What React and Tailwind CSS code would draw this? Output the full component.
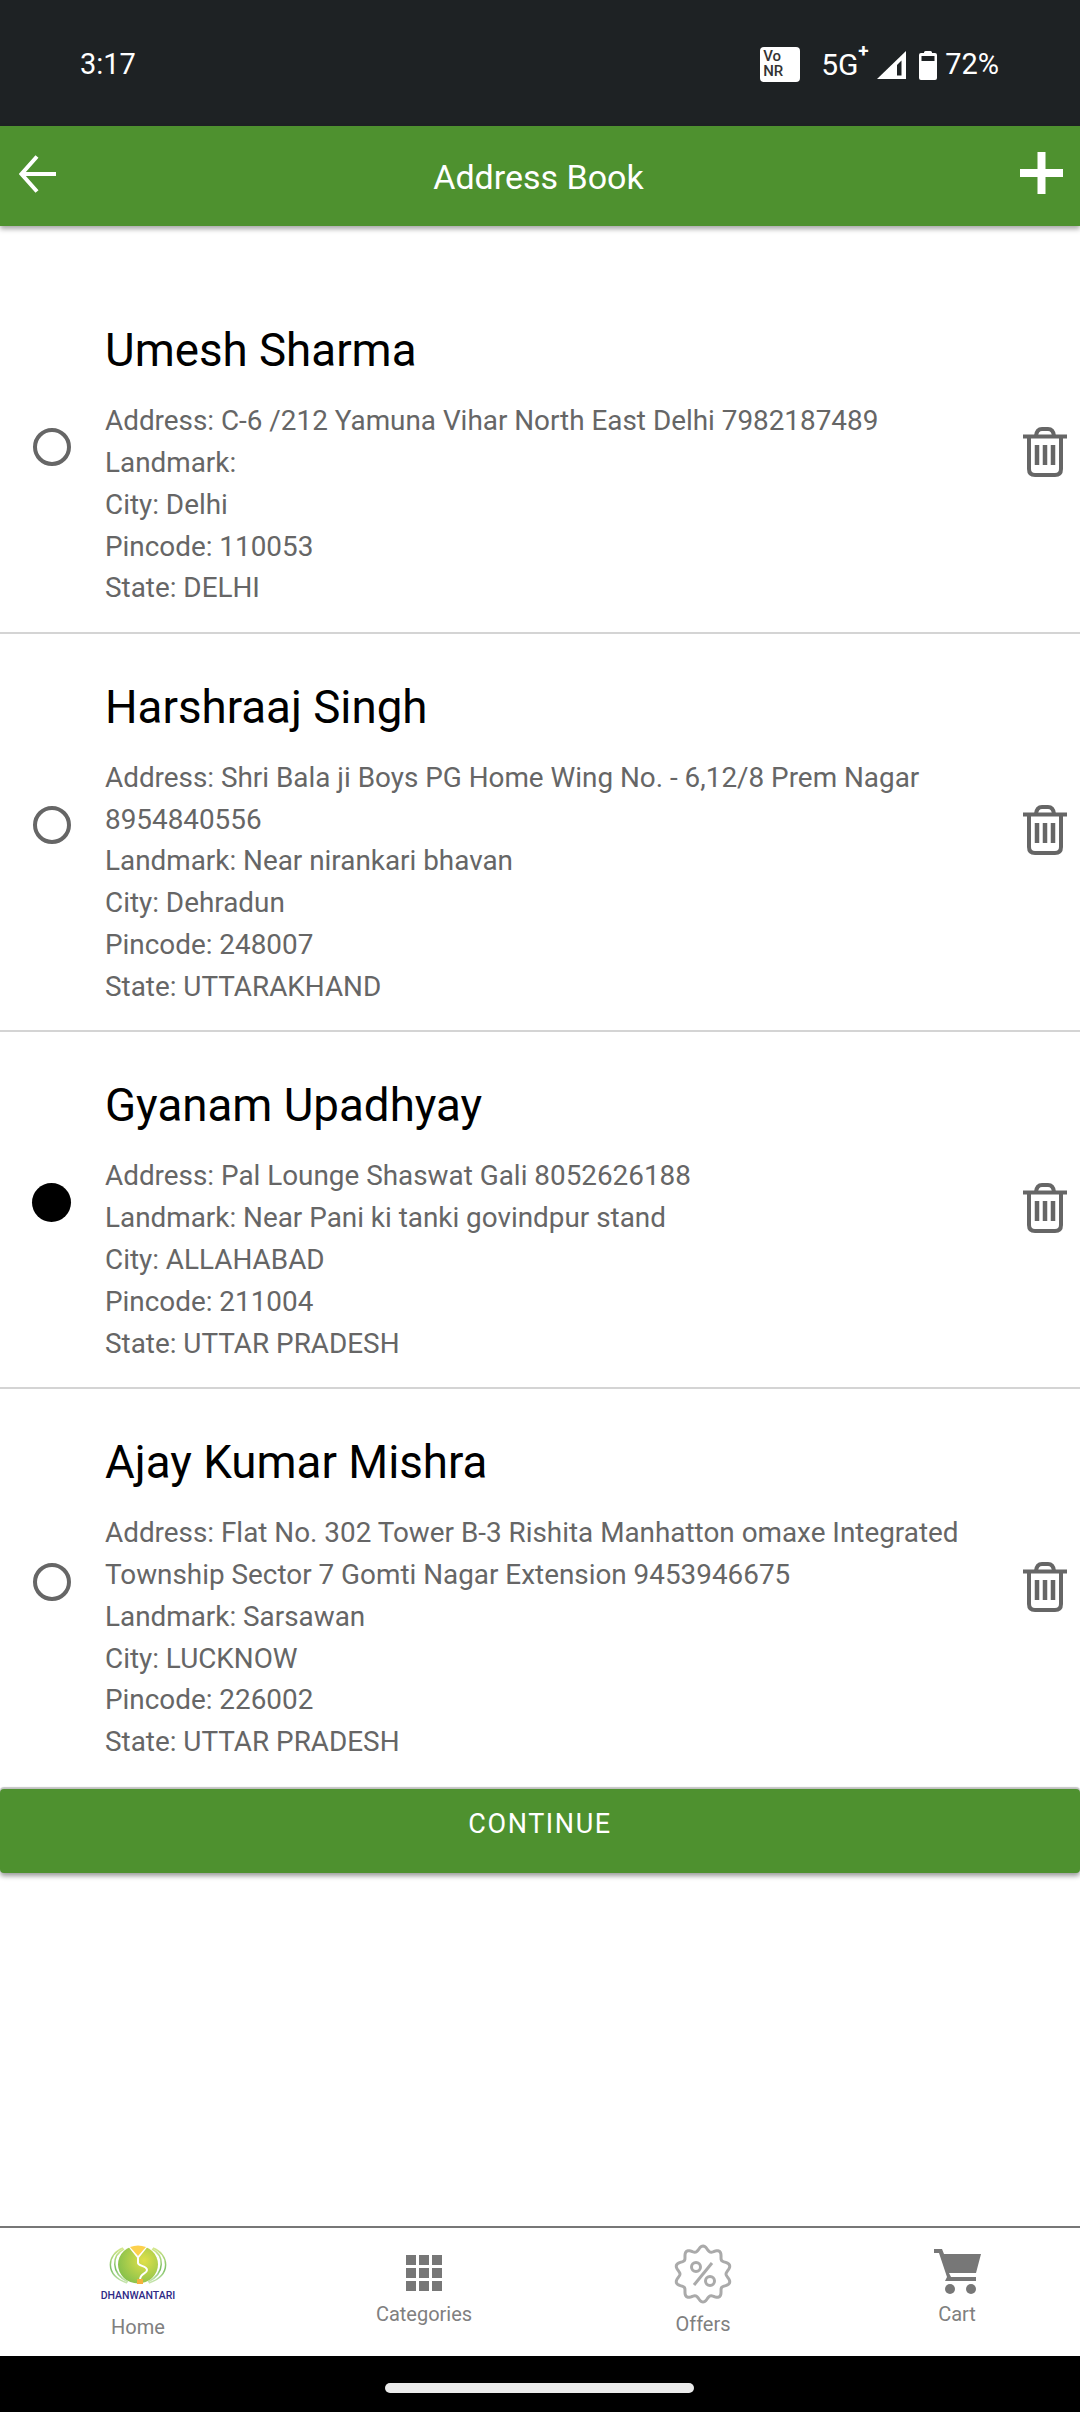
const addresses = [
  {
    name: 'Umesh Sharma',
    lines: ['Address: C-6 /212 Yamuna Vihar North East Delhi 7982187489', 'Landmark:', 'City: Delhi', 'Pincode: 110053', 'State: DELHI'],
  },
  {
    name: 'Harshraaj Singh',
    lines: ['Address: Shri Bala ji Boys PG Home Wing No. - 6,12/8 Prem Nagar 8954840556', 'Landmark: Near nirankari bhavan', 'City: Dehradun', 'Pincode: 248007', 'State: UTTARAKHAND'],
  },
  {
    name: 'Gyanam Upadhyay',
    selected: true,
    lines: ['Address: Pal Lounge Shaswat Gali 8052626188', 'Landmark: Near Pani ki tanki govindpur stand', 'City: ALLAHABAD', 'Pincode: 211004', 'State: UTTAR PRADESH'],
  },
  {
    name: 'Ajay Kumar Mishra',
    lines: ['Address: Flat No. 302 Tower B-3 Rishita Manhatton omaxe Integrated Township Sector 7 Gomti Nagar Extension 9453946675', 'Landmark: Sarsawan', 'City: LUCKNOW', 'Pincode: 226002', 'State: UTTAR PRADESH'],
  },
]

function badgePath() {
  const pts = []
  for (let i = 0; i < 120; i++) {
    const a = (i / 120) * Math.PI * 2
    const r = 25.5 + 2.5 * Math.cos(a * 10)
    pts.push(`${(30 + r * Math.sin(a)).toFixed(2)},${(30 - r * Math.cos(a)).toFixed(2)}`)
  }
  return `M${pts.join('L')}Z`
}

function StatusBar() {
  return (
    <div className="h-[126px] bg-[#1e2224] flex items-center text-white text-[29px] pl-[80px] pt-[3px] shrink-0">
      <span>3:17</span>
      <div className="ml-auto mr-[81px] flex items-center">
        <div className="w-[40px] h-[35px] bg-white rounded-[4px] text-[#333] text-[15px] leading-[15px] font-medium pl-[3px] pt-[2px]">
          Vo<br />NR
        </div>
        <span className="ml-[21px] w-[50px] relative text-[30px]">5G<span className="absolute left-[37px] top-[-5px] text-[19px] font-bold">+</span></span>
        <svg className="ml-[6px]" width="29" height="28" viewBox="0 0 29 28">
          <path d="M29 0V28H0Z" fill="#fff" />
          <path d="M20 14V24.5H24.5V9.5Z" fill="#1e2224" />
        </svg>
        <svg className="ml-[13px]" width="18" height="30" viewBox="0 0 18 30">
          <path d="M5 2.5Q5 1 6.5 1H11.5Q13 1 13 2.5V3H16Q18 3 18 5V28Q18 30 16 30H2Q0 30 0 28V5Q0 3 2 3H5Z" fill="#fff" />
          <rect x="2.5" y="6" width="13" height="5" fill="#1e2224" />
        </svg>
        <span className="ml-[8px]">72%</span>
      </div>
    </div>
  )
}

function Header() {
  return (
    <div className="h-[100px] bg-[#4e912f] shrink-0 relative z-10 flex items-center justify-center text-white text-[34px] pr-[3px] shadow-[0_3px_5px_rgba(0,0,0,0.35)]">
      <svg className="absolute left-[19px] top-[29px]" width="38" height="38" viewBox="0 0 38 38">
        <path d="M18 1.5L2.5 19L18 36.5M2.5 19H37" fill="none" stroke="#fff" strokeWidth="4" />
      </svg>
      <span className="pt-[2px]">Address Book</span>
      <svg className="absolute left-[1020px] top-[26px]" width="43" height="42" viewBox="0 0 43 42">
        <path d="M21.5 0V42M0 21H43" fill="none" stroke="#fff" strokeWidth="8" />
      </svg>
    </div>
  )
}

function TrashIcon() {
  return (
    <svg width="44" height="50" viewBox="0 0 44 50" fill="none" stroke="#666" strokeWidth="4">
      <path d="M0 9.5H44" />
      <path d="M13 9C13.5 4 15.5 2 19 2H25C28.5 2 30.5 4 31 9" />
      <path d="M6 10V42Q6 48 12 48H32Q38 48 38 42V10" />
      <path d="M14 18V38M22 18V38M30 18V38" strokeWidth="4.5" />
    </svg>
  )
}

function AddressRow({ item, last }) {
  return (
    <div className={`flex items-center ${last ? '' : 'border-b-2 border-[#d4d4d4]'}`}>
      <div className="w-[105px] shrink-0 flex justify-center pr-[2px] mb-[14px]">
        {item.selected ? (
          <div className="w-[39px] h-[39px] rounded-full bg-black" />
        ) : (
          <div className="w-[38px] h-[38px] rounded-full border-[4px] border-[#666]" />
        )}
      </div>
      <div className={`w-[885px] shrink-0 pt-[47px] ${last ? 'pb-[26px]' : 'pb-[22.5px]'}`}>
        <div className="text-[45.7px] leading-[54px] text-black">{item.name}</div>
        <div className="mt-[22px] text-[27.86px] leading-[41.85px] text-[#666]">
          {item.lines.map((line) => (
            <div key={line}>{line}</div>
          ))}
        </div>
      </div>
      <div className="ml-[33px] mb-[4px]">
        <TrashIcon />
      </div>
    </div>
  )
}

function Logo() {
  return (
    <div className="w-[73px] flex flex-col items-center">
      <svg width="62" height="39" viewBox="0 0 62 39">
        <defs>
          <radialGradient id="leaf" cx="0.65" cy="0.4" r="0.7">
            <stop offset="0" stopColor="#e0e04a" />
            <stop offset="1" stopColor="#84c04c" />
          </radialGradient>
          <linearGradient id="arc" x1="0" y1="0" x2="0" y2="1">
            <stop offset="0" stopColor="#d5e88f" />
            <stop offset="0.6" stopColor="#7cc063" />
            <stop offset="1" stopColor="#c9e6b0" />
          </linearGradient>
        </defs>
        <path d="M16 3C0 9 -3 30 20 38" fill="none" stroke="url(#arc)" strokeWidth="1.5" />
        <path d="M46 3C62 9 65 30 42 38" fill="none" stroke="url(#arc)" strokeWidth="1.5" />
        <path d="M17 4C5 10 3 28 21 37" fill="none" stroke="url(#arc)" strokeWidth="1.5" />
        <path d="M45 4C57 10 59 28 41 37" fill="none" stroke="url(#arc)" strokeWidth="1.5" />
        <ellipse cx="31" cy="19.5" rx="20" ry="19" fill="url(#leaf)" />
        <path d="M20 0H42L31 14Z" fill="#fff" />
        <path d="M23 2Q31 -1 39 2L31 11Z" fill="#fcd14d" />
        <path d="M31 13V18C31 21 40 21 40 25C40 29 33 28 33 35" fill="none" stroke="#fff" strokeWidth="2" />
        <rect x="30" y="34" width="6" height="5" fill="#f5b13d" />
      </svg>
      <div className="mt-[7px] text-[10.5px] leading-[10px] font-medium text-[#2e2a86] whitespace-nowrap">DHANWANTARI</div>
    </div>
  )
}

function BottomNav() {
  return (
    <div className="h-[130px] shrink-0 bg-white border-t-2 border-[#777] flex text-[20px] leading-[24px] text-[#808080]">
      <div className="w-[276px] flex flex-col items-center pt-[17px]">
        <Logo />
        <div className="mt-[14px]">Home</div>
      </div>
      <div className="w-[296px] flex flex-col items-center pt-[27px]">
        <div className="grid grid-cols-3 gap-[3px] w-[36px]">
          {[...Array(9)].map((_, i) => (
            <div key={i} className="h-[10px] bg-[#777]" />
          ))}
        </div>
        <div className="mt-[11px]">Categories</div>
      </div>
      <div className="w-[262px] flex flex-col items-center pt-[16px]">
        <svg width="60" height="60" viewBox="0 0 60 60" fill="none" stroke="#aaa" strokeWidth="3">
          <path d={badgePath()} />
          <path d="M21 41L39 19" />
          <circle cx="23" cy="23" r="4.5" />
          <circle cx="37" cy="37" r="4.5" />
        </svg>
        <div className="mt-[8px]">Offers</div>
      </div>
      <div className="w-[246px] flex flex-col items-center pt-[21px]">
        <svg width="47" height="45" viewBox="0 0 47 45" fill="#777">
          <path d="M0 0H8L10 5H47L42 24H15L17 28H42V32H11L13 28L5 4H0Z" />
          <circle cx="16" cy="40" r="5" />
          <circle cx="37" cy="40" r="5" />
        </svg>
        <div className="mt-[8px]">Cart</div>
      </div>
    </div>
  )
}

export default function App() {
  return (
    <div className="w-[1080px] h-[2412px] bg-white flex flex-col overflow-hidden font-['Roboto',sans-serif]">
      <StatusBar />
      <Header />
      <div className="pt-[51px] shrink-0">
        {addresses.map((item, i) => (
          <AddressRow key={item.name} item={item} last={i === addresses.length - 1} />
        ))}
      </div>
      <div className="h-[84px] shrink-0 bg-[#4e912f] rounded-[4px] flex justify-center pt-[20px] text-white text-[27px] leading-[30px] tracking-[1.6px] shadow-[0_-2px_1px_rgba(0,0,0,0.22),0_3px_5px_rgba(0,0,0,0.4)]">
        CONTINUE
      </div>
      <div className="flex-1" />
      <BottomNav />
      <div className="h-[56px] shrink-0 bg-black flex justify-center pt-[27px] pr-[2px]">
        <div className="w-[309px] h-[10px] rounded-full bg-[#ebebeb]" />
      </div>
    </div>
  )
}
